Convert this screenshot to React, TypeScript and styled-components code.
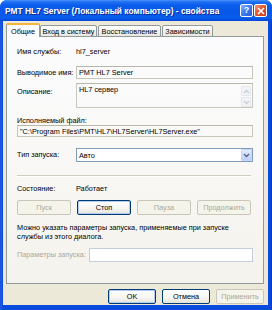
import React from 'react';
import styled, { createGlobalStyle } from 'styled-components';

const Global = createGlobalStyle`
  html, body { margin: 0; padding: 0; background: #ffffff; }
  body { width: 272px; height: 310px; overflow: hidden; font-family: "Liberation Sans", Arial, sans-serif; }
  * { box-sizing: border-box; }
`;

const Window = styled.div`
  width: 272px;
  height: 310px;
  display: flex;
  flex-direction: column;
  background: linear-gradient(90deg, #0A3FD2 0px, #2D6BE8 1px, #0A4BDD 2px, #0A4BDD calc(100% - 2px), #0831C8 100%);
  border-radius: 7px 7px 0 0;
  overflow: hidden;
`;

const TitleBar = styled.div`
  height: 21px;
  flex: none;
  display: flex;
  align-items: center;
  padding: 0 5px 0 5px;
  background: linear-gradient(180deg, #4A95FB 0%, #2272F3 8%, #0A5CEB 25%, #0757E9 60%, #0A5EEC 85%, #0446D8 100%);
`;

const Title = styled.div`
  flex: 1;
  color: #ffffff;
  font-weight: bold;
  font-size: 8.4px;
  padding-top: 1px;
  white-space: nowrap;
  text-shadow: 1px 1px 0 #0B2A8C;
`;

const CaptionButton = styled.div<{ $kind: 'help' | 'close' }>`
  width: 13px;
  height: 13px;
  margin-left: 1px;
  border: 1px solid #ffffff;
  border-radius: 2px;
  display: flex;
  align-items: center;
  justify-content: center;
  background: ${p => p.$kind === 'close'
    ? 'linear-gradient(135deg, #F29A7E 0%, #E2582F 45%, #C8391A 100%)'
    : 'linear-gradient(135deg, #8DB4FA 0%, #3F7FF2 45%, #2359DB 100%)'};
  color: #fff;
  font-weight: bold;
  font-size: 9px;
  line-height: 1;
`;

const Body = styled.div`
  flex: 1;
  margin: 0 4px 5px 3px;
  background: #ECE9D8;
  display: flex;
  flex-direction: column;
  padding: 2px 4px 0 3px;
`;

const TabsRow = styled.div`
  height: 14px;
  display: flex;
  align-items: flex-end;
  font-size: 7.3px;
`;

const Tab = styled.div<{ $active?: boolean; $w: number }>`
  position: relative;
  z-index: ${p => (p.$active ? 2 : 0)};
  width: ${p => p.$w}px;
  height: ${p => (p.$active ? 14 : 12)}px;
  margin-right: ${p => (p.$active ? 0 : 1)}px;
  border: 1px solid #919B9C;
  border-bottom: ${p => (p.$active ? 'none' : '1px solid #919B9C')};
  border-top: ${p => (p.$active ? '2px solid #F5B43C' : '1px solid #919B9C')};
  border-radius: 2px 2px 0 0;
  background: ${p => (p.$active ? '#FCFCFE' : 'linear-gradient(180deg, #FFFFFF 0%, #F3F2EC 60%, #E8E6DC 100%)')};
  display: flex;
  align-items: center;
  justify-content: center;
  padding-top: 1px;
  color: #000;
  white-space: nowrap;
`;

const Panel = styled.div`
  position: relative;
  z-index: 1;
  margin-top: -1px;
  height: 248px;
  border: 1px solid #919B9C;
  background: linear-gradient(180deg, #FCFCFE 0%, #F7F6F2 70%, #F3F2EC 100%);
  padding: 10px 10px 0 10px;
  display: flex;
  flex-direction: column;
  font-size: 7.3px;
  color: #000;
`;

const FieldRow = styled.div<{ $mt?: number; $top?: boolean; $col?: number }>`
  display: grid;
  grid-template-columns: ${p => p.$col ?? 59}px 1fr;
  align-items: ${p => (p.$top ? 'start' : 'center')};
  margin-top: ${p => p.$mt ?? 0}px;
`;

const Label = styled.div<{ $pt?: number; $disabled?: boolean }>`
  line-height: 10px;
  padding-top: ${p => p.$pt ?? 0}px;
  color: ${p => (p.$disabled ? '#ACA899' : '#000')};
  white-space: nowrap;
`;

const Value = styled.div`
  line-height: 10px;
  white-space: nowrap;
`;

const ReadBox = styled.div<{ $h: number }>`
  height: ${p => p.$h}px;
  border: 1px solid #C9C7BA;
  border-top-color: #B9B7AA;
  padding: 1px 2px 0 2px;
  line-height: 9px;
  white-space: nowrap;
  overflow: hidden;
  display: flex;
  justify-content: space-between;
`;

const ScrollCol = styled.div`
  display: flex;
  flex-direction: column;
  gap: 1px;
  margin: 1px -1px 0 0;
`;

const ScrollBtn = styled.div`
  width: 10px;
  height: 10px;
  border: 1px solid #E3E6EC;
  border-radius: 1px;
  background: #F2F3F6;
  display: flex;
  align-items: center;
  justify-content: center;
`;

const Combo = styled.div`
  height: 14px;
  border: 1px solid #7F9DB9;
  background: #fff;
  display: flex;
  align-items: center;
  padding-left: 2px;
  justify-content: space-between;
`;

const ComboButton = styled.div`
  width: 11px;
  height: 12px;
  border: 1px solid #C6D5F7;
  border-radius: 1px;
  background: linear-gradient(180deg, #E4ECFD 0%, #CFDCFB 50%, #BFD0F7 100%);
  display: flex;
  align-items: center;
  justify-content: center;
`;

const Separator = styled.div<{ $mt: number }>`
  margin-top: ${p => p.$mt}px;
  margin-right: 2px;
  height: 2px;
  border-top: 1px solid #D0CEBF;
  border-bottom: 1px solid #FFFFFF;
`;

const ButtonRow = styled.div<{ $mt: number }>`
  margin-top: ${p => p.$mt}px;
  display: flex;
  gap: 6px;
`;

const Button = styled.div<{ $disabled?: boolean; $w: number; $default?: boolean }>`
  width: ${p => p.$w}px;
  height: 15px;
  border: 1px solid ${p => (p.$disabled ? '#C9C7BA' : '#003C74')};
  border-radius: 2px;
  background: ${p => (p.$disabled ? '#F5F4EA' : 'linear-gradient(180deg, #FFFFFF 0%, #F6F5F0 60%, #E4E2D8 100%)')};
  box-shadow: ${p => (p.$default ? 'inset 0 0 0 1px #B3CBF3' : 'none')};
  color: ${p => (p.$disabled ? '#ACA899' : '#000')};
  display: flex;
  align-items: center;
  justify-content: center;
  font-size: 7.3px;
`;

const Note = styled.div<{ $mt: number }>`
  margin-top: ${p => p.$mt}px;
  line-height: 9px;
`;

const InputBox = styled.div`
  height: 14px;
  border: 1px solid #C3CFDD;
  background: #FFFFFF;
`;

const Footer = styled.div`
  margin-top: 5px;
  display: flex;
  justify-content: flex-end;
  gap: 6px;
`;

const Chevron = ({ dir, color }: { dir: 'up' | 'down'; color: string }) => (
  <svg width="7" height="5" viewBox="0 0 7 5">
    <path d={dir === 'down' ? 'M1 1 L3.5 3.5 L6 1' : 'M1 4 L3.5 1.5 L6 4'} fill="none" stroke={color} strokeWidth="1.3" />
  </svg>
);

export default function App() {
  return (
    <>
      <Global />
      <Window>
        <TitleBar>
          <Title>PMT HL7 Server (Локальный компьютер) - свойства</Title>
          <CaptionButton $kind="help">?</CaptionButton>
          <CaptionButton $kind="close">
            <svg width="8" height="8" viewBox="0 0 8 8">
              <path d="M1 1 L7 7 M7 1 L1 7" stroke="#fff" strokeWidth="1.6" />
            </svg>
          </CaptionButton>
        </TitleBar>
        <Body>
          <TabsRow>
            <Tab $active $w={34}>Общие</Tab>
            <Tab $w={57}>Вход в систему</Tab>
            <Tab $w={63}>Восстановление</Tab>
            <Tab $w={51}>Зависимости</Tab>
          </TabsRow>
          <Panel>
            <FieldRow>
              <Label>Имя службы:</Label>
              <Value>hl7_server</Value>
            </FieldRow>
            <FieldRow $mt={9}>
              <Label>Выводимое имя:</Label>
              <ReadBox $h={13}>PMT HL7 Server</ReadBox>
            </FieldRow>
            <FieldRow $mt={4} $top>
              <Label $pt={4}>Описание:</Label>
              <ReadBox $h={25}>
                <span>HL7 сервер</span>
                <ScrollCol>
                  <ScrollBtn><Chevron dir="up" color="#C9CCD6" /></ScrollBtn>
                  <ScrollBtn><Chevron dir="down" color="#C9CCD6" /></ScrollBtn>
                </ScrollCol>
              </ReadBox>
            </FieldRow>
            <Note $mt={8}>Исполняемый файл:</Note>
            <ReadBox $h={12}>"C:\Program Files\PMT\HL7\HL7Server\HL7Server.exe"</ReadBox>
            <FieldRow $mt={11}>
              <Label>Тип запуска:</Label>
              <Combo>
                <span>Авто</span>
                <ComboButton><Chevron dir="down" color="#4D6185" /></ComboButton>
              </Combo>
            </FieldRow>
            <Separator $mt={13} />
            <FieldRow $mt={7}>
              <Label>Состояние:</Label>
              <Value>Работает</Value>
            </FieldRow>
            <ButtonRow $mt={6}>
              <Button $w={54} $disabled>Пуск</Button>
              <Button $w={54} $default>Стоп</Button>
              <Button $w={54} $disabled>Пауза</Button>
              <Button $w={54} $disabled>Продолжить</Button>
            </ButtonRow>
            <Note $mt={8}>
              Можно указать параметры запуска, применяемые при запуске<br />
              службы из этого диалога.
            </Note>
            <FieldRow $mt={7} $col={72}>
              <Label $disabled>Параметры запуска:</Label>
              <InputBox />
            </FieldRow>
          </Panel>
          <Footer>
            <Button $w={48} $default>OK</Button>
            <Button $w={48}>Отмена</Button>
            <Button $w={48} $disabled>Применить</Button>
          </Footer>
        </Body>
      </Window>
    </>
  );
}
